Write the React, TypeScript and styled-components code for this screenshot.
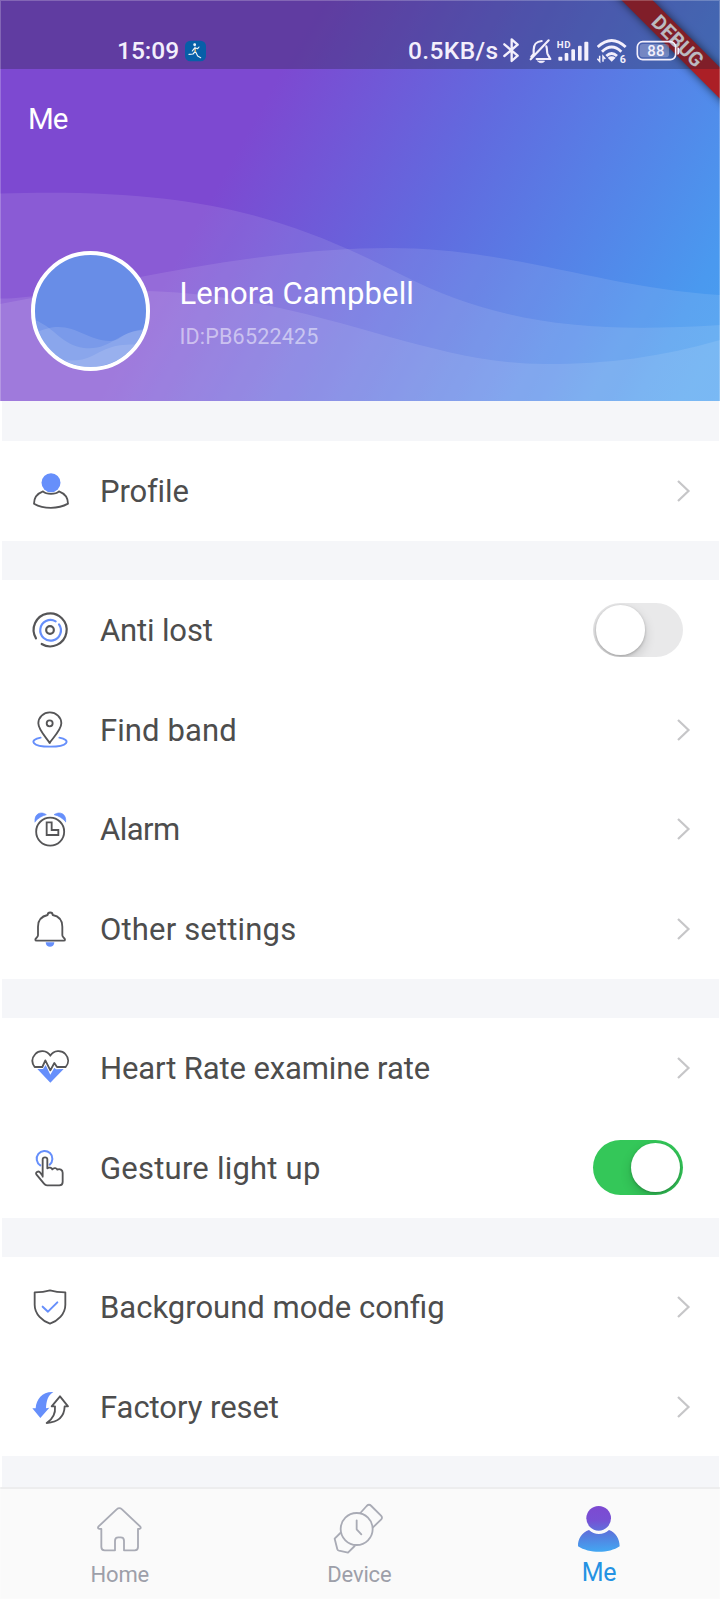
import React from "react";
import styled, { createGlobalStyle } from "styled-components";

const BLUE = "#668ffb";
const INK = "#555557";
const GREY = "#a9abb5";

const GlobalStyle = createGlobalStyle`
  * { box-sizing: border-box; }
  body { margin: 0; background: #fff; font-family: Roboto, "Liberation Sans", sans-serif; }
  svg { display: block; flex: none; }
`;

const Screen = styled.div`
  width: 720px;
  height: 1599px;
  display: flex;
  flex-direction: column;
  background: #fff;
  position: relative;
  overflow: hidden;
`;

const EdgeHighlight = styled.div`
  position: absolute;
  inset: 0;
  border: 1px solid rgba(255, 255, 255, 0.22);
  pointer-events: none;
`;

const Header = styled.header`
  height: 401.2px;
  flex: none;
  position: relative;
  overflow: hidden;
  color: #fff;
  background: linear-gradient(119deg, #7d49d1 0%, #7d49d1 34%, #616bdf 59%, #4a99ef 91%, #48a0f1 100%);
`;

const Waves = styled.svg`
  position: absolute;
  inset: 0;
`;

const DebugRibbon = styled.div`
  position: absolute;
  left: 579px;
  top: 31px;
  width: 200px;
  height: 21.5px;
  transform: rotate(45deg);
  background: #ab1f26;
  box-shadow: 0 0 9px rgba(0, 0, 0, 0.65);
  color: #fff;
  font-size: 20px;
  font-weight: 700;
  line-height: 22px;
  text-align: center;
  text-indent: -3px;
`;

const StatusBar = styled.div`
  position: relative;
  height: 68.5px;
  padding: 36px 38px 0 117px;
  display: flex;
  justify-content: space-between;
  align-items: flex-start;
  background: rgba(30, 30, 50, 0.3);
  color: #f3effc;
`;

const StatusGroup = styled.div`
  display: flex;
  align-items: center;
  height: 30px;
`;

const StatusText = styled.span<{ $width: number; $spacing: number }>`
  width: ${(p) => p.$width}px;
  font-size: 24.5px;
  line-height: 30px;
  font-weight: 500;
  letter-spacing: ${(p) => p.$spacing}px;
  white-space: nowrap;
`;

const PageTitle = styled.h1`
  position: relative;
  margin: 32px 0 0 28px;
  font-size: 29.5px;
  line-height: 36px;
  font-weight: 400;
  letter-spacing: -1px;
`;

const User = styled.div`
  position: relative;
  display: flex;
  margin: 114.5px 0 0 30.5px;
`;

const Avatar = styled.div`
  width: 119.5px;
  height: 119.5px;
  border: 4px solid #fff;
  border-radius: 50%;
  overflow: hidden;
  background: #688de7;
`;

const UserText = styled.div`
  margin-left: 29.5px;
  padding-top: 25px;
`;

const UserName = styled.div`
  font-size: 31px;
  line-height: 36px;
  letter-spacing: 0.1px;
`;

const UserId = styled.div`
  margin-top: 12px;
  font-size: 21.5px;
  line-height: 26px;
  letter-spacing: 0.2px;
  color: rgba(255, 255, 255, 0.52);
`;

const Content = styled.main`
  flex: 1;
  min-height: 0;
  margin: 0 1.5px 0 2px;
  padding-top: 39.8px;
  display: flex;
  flex-direction: column;
  gap: 39.7px;
  background: #f5f6f9;
`;

const Section = styled.section`
  flex: none;
  background: #fff;
`;

const Row = styled.div`
  height: 99.6px;
  display: flex;
  align-items: center;
  padding: 0 28px;
`;

const Label = styled.span<{ $spacing: number }>`
  margin: 2px 0 0 30px;
  flex: 1;
  font-size: 31px;
  line-height: 40px;
  letter-spacing: ${(p) => p.$spacing}px;
  color: #4d4d4d;
  white-space: nowrap;
`;

const Track = styled.div<{ $on: boolean }>`
  width: 89.5px;
  height: 54.5px;
  margin-right: 8px;
  padding: 2.5px;
  border-radius: 28px;
  display: flex;
  overflow: hidden;
  justify-content: ${(p) => (p.$on ? "flex-end" : "flex-start")};
  background: ${(p) => (p.$on ? "#34c759" : "#e9e9ea")};
`;

const Thumb = styled.div`
  width: 49.5px;
  height: 49.5px;
  border-radius: 50%;
  background: #fff;
  box-shadow: 0 5px 12px rgba(0, 0, 0, 0.16), 0 1px 3px rgba(0, 0, 0, 0.22);
`;

const NavBar = styled.nav`
  height: 112.5px;
  flex: none;
  display: grid;
  grid-template-columns: repeat(3, 239.6px);
  border-top: 2px solid #ededee;
  background: #fafafa;
`;

const NavItem = styled.div`
  display: flex;
  flex-direction: column;
  align-items: center;
  padding-top: 11.5px;
`;

const NavLabel = styled.span<{ $active?: boolean }>`
  font-size: ${(p) => (p.$active ? 25 : 22)}px;
  line-height: ${(p) => (p.$active ? 25 : 29)}px;
  letter-spacing: ${(p) => (p.$active ? -0.3 : -0.15)}px;
  color: ${(p) => (p.$active ? "#2492e3" : "#9d9fa9")};
`;

const RowSvg = ({ children }: { children: React.ReactNode }) => (
  <svg width="40" height="40" viewBox="0 0 120 120" fill="none" stroke={INK} strokeWidth="5.500" strokeLinecap="round" strokeLinejoin="round">
    {children}
  </svg>
);

const ProfileIcon = () => (
  <RowSvg>
    <circle cx="63" cy="35" r="28.5" fill={BLUE} stroke="none" />
    <path d="M39 61C49 71 77 71 87 61C103 67 114 80 114 98C84 115 41 115 12 98C12 80 23 67 39 61Z" />
  </RowSvg>
);

const AntiLostIcon = () => (
  <RowSvg>
    <path d="M18 85A49.5 49.5 0 1 1 35 102" strokeWidth="6.500" />
    <path d="M77 34A31 31 0 1 0 87 43" stroke={BLUE} strokeWidth="6.500" />
    <circle cx="60" cy="60" r="11.5" strokeWidth="6.500" />
  </RowSvg>
);

const FindIcon = () => (
  <RowSvg>
    <path d="M32 83C-5 90 6 110 60 110C114 110 125 90 88 83" stroke={BLUE} />
    <path d="M59 99C53 87 25 61 25 40A34.5 33 0 0 1 94 40C94 61 65 87 59 99Z" />
    <circle cx="59" cy="40" r="9" />
  </RowSvg>
);

const AlarmIcon = () => (
  <RowSvg>
    <path d="M15 38C12 15 32 5 49 17C36 20 25 27 15 38Z" fill={BLUE} stroke={BLUE} strokeWidth="2" />
    <path d="M107 38C110 15 90 5 72 17C86 20 97 27 107 38Z" fill={BLUE} stroke={BLUE} strokeWidth="2" />
    <circle cx="60.500" cy="68" r="42" />
    <path d="M50 40H65V63H85V78H50Z" strokeLinejoin="miter" />
  </RowSvg>
);

const BellIcon = () => (
  <RowSvg>
    <path d="M47 100H73C73 118 47 118 47 100Z" fill={BLUE} stroke="none" />
    <path d="M53 18C53 8 68 8 68 18C88 22 97 35 97 53V79C97 86 105 86 105 92Q105 95 101 95H20Q16 95 16 92C16 86 24 86 24 79V53C24 35 34 22 53 18Z" />
  </RowSvg>
);

const HeartIcon = () => (
  <RowSvg>
    <path d="M22 63H39L47 51L61 80L73 59L78 64L101 63L61 104Z" fill={BLUE} stroke="none" />
    <path d="M61 23C51 5 26 6 16 18C5 30 5 45 14 57H37L46 37L61 67L73 45L81 57H107C117 45 117 30 106 18C96 6 71 5 61 23Z" />
  </RowSvg>
);

const GestureIcon = () => (
  <RowSvg>
    <path d="M31 52A23.500 23.500 0 1 1 59 50" stroke={BLUE} strokeWidth="6" />
    <path d="M38 86V34C38 26 52 26 52 34V61C57 57 65 59 67 64C72 58 80 60 82 65C89 61 98 66 98 74V102Q98 112 88 112H51Q46 112 42 107L19 79C15 73 26 67 31 74L38 84" />
  </RowSvg>
);

const ShieldIcon = () => (
  <RowSvg>
    <path d="M60 10C73 14 91 16 106 16V53C106 82 82 102 60 110C38 102 14 82 14 53V16C29 16 47 14 60 10Z" />
    <path d="M38 59L54 74L82 46" stroke={BLUE} strokeWidth="6" />
  </RowSvg>
);

const ResetIcon = () => (
  <RowSvg>
    <path d="M70 15C53 26 49 42 48 64L58 62L31 93L7 64H17C19 36 38 13 70 15Z" fill={BLUE} stroke="none" />
    <path d="M50 108C87 106 103 88 104 58H114L90 28L65 58H75C77 79 67 97 50 108Z" />
  </RowSvg>
);

const Chevron = () => (
  <svg width="14" height="24" viewBox="0 0 14 24" fill="none" stroke="#c6c6c8" strokeWidth="2.2">
    <path d="M1 2L11.500 12L1 22" />
  </svg>
);

const Toggle = ({ on }: { on: boolean }) => (
  <Track $on={on}>
    <Thumb />
  </Track>
);

const RunnerBadge = () => (
  <svg width="21" height="22" viewBox="0 0 63 66">
    <rect y="2" width="63" height="62" rx="16" fill="#075fa8" />
    <g fill="none" stroke="#eef6fa" strokeWidth="3.500" strokeLinecap="round" strokeLinejoin="round">
      <path d="M30 21L31 34L24 42L12 43M31 34L38 48L47 53M28 25L22 33M31 24L38 26L42 21" />
      <circle cx="29" cy="14" r="2.500" fill="#eef6fa" />
    </g>
    <path d="M31 27V36" stroke="#e1a947" strokeWidth="3" />
  </svg>
);

const StatusIcons = () => (
  <>
    <svg width="28" height="30" viewBox="0 0 84 90" fill="none" stroke="currentColor" strokeWidth="7" strokeLinejoin="round" strokeLinecap="round">
      <path d="M13 25L53 59L35 75V10L53 26L13 60" />
    </svg>
    <svg width="29" height="30" viewBox="0 0 87 90" fill="none" stroke="currentColor" strokeWidth="6.500" strokeLinejoin="round" strokeLinecap="round">
      <path d="M8 70L62 13M41 15C25 16 17 27 17 41V54L10 62M55 31C58 39 56 49 59 55L67 69H26" />
      <path d="M29 75H50C46 82 33 82 29 75Z" fill="currentColor" strokeWidth="2" />
    </svg>
    <svg width="40" height="30" viewBox="0 0 120 90" fill="currentColor">
      <text x="-1" y="35" fontSize="29" fontWeight="700" fontFamily="Roboto, sans-serif" letterSpacing="2">HD</text>
      <rect x="4" y="62" width="12" height="12" rx="3" />
      <rect x="23" y="51" width="11" height="23" rx="3" />
      <rect x="43" y="40" width="11" height="34" rx="3" />
      <rect x="63" y="29" width="11" height="45" rx="3" />
      <rect x="82" y="17" width="12" height="57" rx="3" />
    </svg>
    <svg width="39" height="30" viewBox="0 0 117 90" fill="none" stroke="currentColor" strokeWidth="8.500">
      <path d="M2 33Q44 -6 86 33M15 47Q44 19 73 47M28 60Q44 45 60 60" />
      <path d="M44 77L32 65Q44 57 56 65Z" fill="currentColor" stroke="none" />
      <path d="M8 59V76L1 68M18 77V61L25 69" strokeWidth="4.500" />
      <text x="68" y="80" fontSize="32" fontWeight="700" fontFamily="Roboto, sans-serif" fill="currentColor" stroke="none">6</text>
    </svg>
    <svg width="46" height="30" viewBox="0 0 138 90" fill="none" stroke="currentColor" strokeWidth="5">
      <rect x="4" y="17" width="115" height="54" rx="16" />
      <rect x="11" y="24" width="88" height="40" rx="9" fill="currentColor" fillOpacity=".27" stroke="none" />
      <path d="M124 34Q130 34 130 40V50Q130 56 124 56Z" fill="currentColor" stroke="none" />
      <text x="60" y="59" fontSize="45" fontWeight="500" letterSpacing="1" textAnchor="middle" fontFamily="Roboto, sans-serif" fill="currentColor" stroke="none">88</text>
    </svg>
  </>
);

const HomeIcon = () => (
  <svg width="60" height="60" viewBox="0 0 180 180" fill="none" stroke={GREY} strokeWidth="5.500" strokeLinejoin="round" strokeLinecap="round">
    <path d="M34 87V141Q34 151 44 151H75V122Q75 112 85 112H92Q102 112 102 122V151H134Q144 151 144 141V87Q155 87 151 80L96 28Q88 21 80 28L25 80Q21 87 34 87Z" />
  </svg>
);

const DeviceIcon = () => (
  <svg width="60" height="60" viewBox="0 0 180 180" fill="none" stroke={GREY} strokeWidth="5.500" strokeLinejoin="round" strokeLinecap="round">
    <circle cx="83" cy="87" r="48" />
    <path d="M83 61V88L97 103M94 39L113 18Q120 11 127 18L156 47Q162 53 156 59L132 82M34 99L17 116L25 148Q26 151 30 152L57 158L77 138" />
  </svg>
);

const MeIcon = () => (
  <svg width="60" height="60" viewBox="0 0 180 180">
    <defs>
      <linearGradient id="me-fill" gradientUnits="userSpaceOnUse" x1="88" y1="18" x2="92" y2="156">
        <stop offset="0" stopColor="#7d49d1" />
        <stop offset=".3" stopColor="#7750d4" />
        <stop offset=".65" stopColor="#557edf" />
        <stop offset="1" stopColor="#42a8f3" />
      </linearGradient>
    </defs>
    <g fill="url(#me-fill)">
      <circle cx="89" cy="55" r="37" />
      <path d="M60 90C76 106 103 106 120 90C140 97 152 117 152 139C121 161 60 161 27 139C26 117 39 97 60 90Z" />
    </g>
  </svg>
);

type Item = { icon: React.FC; label: string; spacing: number; toggle?: boolean };

const sections: Item[][] = [
  [{ icon: ProfileIcon, label: "Profile", spacing: -0.15 }],
  [
    { icon: AntiLostIcon, label: "Anti lost", spacing: -0.15, toggle: false },
    { icon: FindIcon, label: "Find band", spacing: 0.1 },
    { icon: AlarmIcon, label: "Alarm", spacing: -0.55 },
    { icon: BellIcon, label: "Other settings", spacing: 0.17 },
  ],
  [
    { icon: HeartIcon, label: "Heart Rate examine rate", spacing: -0.12 },
    { icon: GestureIcon, label: "Gesture light up", spacing: 0.22, toggle: true },
  ],
  [
    { icon: ShieldIcon, label: "Background mode config", spacing: 0 },
    { icon: ResetIcon, label: "Factory reset", spacing: -0.05 },
  ],
];

export default function App() {
  return (
    <Screen>
      <GlobalStyle />
      <Header>
        <Waves width="720" height="402" viewBox="0 0 720 402" fill="#fff" fillOpacity=".1">
          <path d="M0 193.500C190 188 280 213 400 274C500 325 590 333 720 325V402H0Z" />
          <path d="M0 304C130 280 260 248 390 248C510 248 600 287 720 295V402H0Z" />
          <path d="M0 298.500C30 299 50 291 100 291C300 284 410 364 545 364C610 364 660 357 720 340V402H0Z" />
        </Waves>
        <DebugRibbon>DEBUG</DebugRibbon>
        <StatusBar>
          <StatusGroup>
            <StatusText $width={68} $spacing={0}>15:09</StatusText>
            <RunnerBadge />
          </StatusGroup>
          <StatusGroup>
            <StatusText $width={92} $spacing={0.4}>0.5KB/s</StatusText>
            <StatusIcons />
          </StatusGroup>
        </StatusBar>
        <PageTitle>Me</PageTitle>
        <User>
          <Avatar>
            <svg width="112" height="112" viewBox="0 0 112 112" fill="#fff" fillOpacity=".12">
              <path d="M0 65C20 73 27 90 49 93C76 96 82 76 112 74V112H0Z" />
              <path d="M0 78C35 61 47 85 75 86C88 86 84 76 112 75V112H0Z" />
              <path d="M0 96C22 106 41 109 57 101C74 93 78 88 112 90V112H0Z" />
            </svg>
          </Avatar>
          <UserText>
            <UserName>Lenora Campbell</UserName>
            <UserId>ID:PB6522425</UserId>
          </UserText>
        </User>
      </Header>
      <Content>
        {sections.map((items, i) => (
          <Section key={i}>
            {items.map(({ icon: Icon, label, spacing, toggle }) => (
              <Row key={label}>
                <Icon />
                <Label $spacing={spacing}>{label}</Label>
                {toggle === undefined ? <Chevron /> : <Toggle on={toggle} />}
              </Row>
            ))}
          </Section>
        ))}
      </Content>
      <NavBar>
        <NavItem>
          <HomeIcon />
          <NavLabel>Home</NavLabel>
        </NavItem>
        <NavItem>
          <DeviceIcon />
          <NavLabel>Device</NavLabel>
        </NavItem>
        <NavItem>
          <MeIcon />
          <NavLabel $active>Me</NavLabel>
        </NavItem>
      </NavBar>
      <EdgeHighlight />
    </Screen>
  );
}
